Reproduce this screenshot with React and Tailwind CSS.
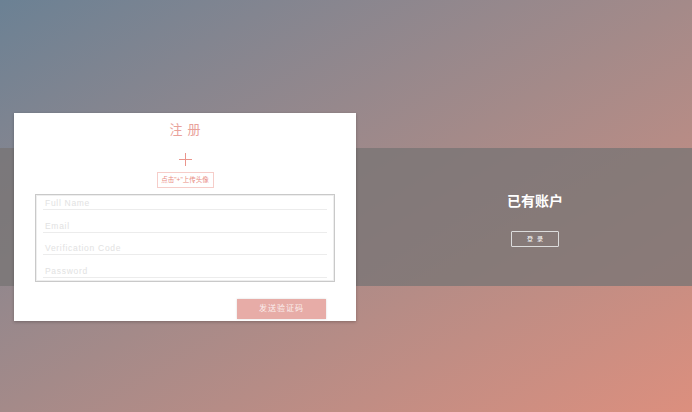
import React from 'react';

const fields = ['Full Name', 'Email', 'Verification Code', 'Password'];

export default function App() {
  return (
    <div className="w-[692px] h-[412px] overflow-hidden bg-gradient-to-br from-[#6b8194] via-[#a48a89] to-[#dc8f7e] flex flex-col" style={{ fontFamily: '"Liberation Sans", "Noto Sans CJK SC", sans-serif' }}>
      <div className="h-[148px] shrink-0" />
      <div className="h-[138px] shrink-0 bg-[rgba(120,116,116,0.78)] flex items-center">
        {/* register card */}
        <div className="ml-[14px] w-[342px] h-[208px] shrink-0 bg-white shadow-[0_1px_3px_rgba(0,0,0,0.25)] flex flex-col items-center">
          <div className="mt-[9px] text-[13px] leading-[16px] tracking-[5px] pl-[5px] text-[#e9a29b]">注册</div>
          <div className="mt-[15px] w-[13px] h-[13px] flex items-center justify-center relative">
            <div className="w-[1px] h-[13px] bg-[#ea958c]" />
            <div className="absolute w-[13px] h-[1px] bg-[#ea958c]" />
          </div>
          <button className="mt-[6px] h-[16px] w-[57px] border border-[#f6cdc9] text-[6.5px] leading-none text-[#e88b82]">
            点击"+"上传头像
          </button>
          <div className="mt-[6px] w-[300px] h-[88px] border border-[#c9c9c9] shadow-[inset_0_0_0_1px_#eeeeee] px-[7px] flex flex-col gap-[7.5px]">
            {fields.map((f) => (
              <div key={f} className="h-[15px] shrink-0 flex items-end border-b border-[#ececec] pl-[2px] pb-[1px] text-[8.5px] leading-[10px] tracking-[0.7px] text-[#e2e2e2]">
                {f}
              </div>
            ))}
          </div>
          <div className="w-full flex justify-end pr-[30px] mt-[17px]">
            <button className="w-[89px] h-[20px] bg-[#e7aca7] shadow-[0_0_2px_rgba(0,0,0,0.15)] text-[8px] tracking-[1px] text-[#fbeeed]">
              发送验证码
            </button>
          </div>
        </div>
        {/* login side */}
        <div className="flex-1 flex flex-col items-center pl-[22px] pt-[4px]">
          <div className="text-[14px] leading-[18px] font-bold text-white">已有账户</div>
          <button className="mt-[21px] w-[48px] h-[16px] border border-[#dcdcdc] rounded-[1px] text-[6px] tracking-[4px] pl-[4px] text-white leading-none">
            登录
          </button>
        </div>
      </div>
      <div className="flex-1" />
    </div>
  );
}
